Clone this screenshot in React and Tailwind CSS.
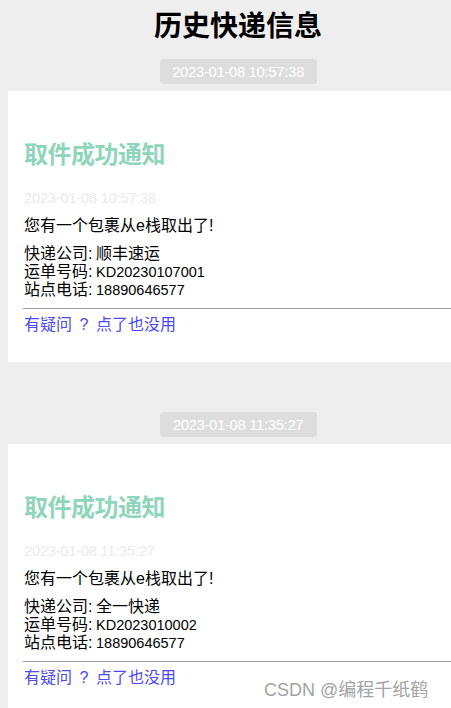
import React from "react";

const records = [
  { time: "2023-01-08 10:57:38", company: "顺丰速运", no: "KD20230107001", phone: "18890646577" },
  { time: "2023-01-08 11:35:27", company: "全一快递", no: "KD2023010002", phone: "18890646577" },
];

function Colon() {
  return <span className="inline-block w-2">:</span>;
}

function Block({ r, first }) {
  return (
    <div className={first ? "mt-[17px]" : "mt-[50px]"}>
      <div className="flex justify-center">
        <div className="h-[25px] w-[157px] rounded-[4px] bg-[#dddddd] text-white text-[15px] leading-[25px] text-center tracking-[-0.4px] font-['Liberation_Sans',sans-serif]">
          {r.time}
        </div>
      </div>
      <div className="mt-[7px] bg-white h-[271px] pt-[46px] px-4">
        <div className="text-[24px] leading-[32px] font-bold text-[#8fd5b9] font-['Noto_Sans_CJK_SC',sans-serif] tracking-[-0.5px]">
          取件成功通知
        </div>
        <div className="mt-[19px] text-[15px] leading-[20px] text-[#ebebeb] tracking-[-0.4px] font-['Liberation_Sans',sans-serif]">
          {r.time}
        </div>
        <div className="mt-[9px] text-[16px] leading-[18px] text-black font-['Liberation_Sans','Noto_Sans_CJK_SC',sans-serif]">
          您有一个包裹从e栈取出了!
        </div>
        <div className="mt-[10px] text-[16px] leading-[18px] text-black font-['Liberation_Sans','Noto_Sans_CJK_SC',sans-serif]">
          <div>快递公司<Colon />{r.company}</div>
          <div>运单号码<Colon /><span className="text-[14.5px]">{r.no}</span></div>
          <div>站点电话<Colon /><span className="text-[14.5px]">{r.phone}</span></div>
        </div>
        <div className="mt-[9px] -ml-px h-px bg-[#a0a0a0]" />
        <div className="mt-[7px] text-[16px] leading-[18px] text-[#4a4af0] font-['Liberation_Sans','Noto_Sans_CJK_SC',sans-serif]">
          有疑问<span className="inline-block w-6 text-center">?</span>点了也没用
        </div>
      </div>
    </div>
  );
}

export default function App() {
  return (
    <div className="relative w-[451px] h-[708px] overflow-hidden bg-[#eeeeee]">
      <div className="w-[476px] px-2 pt-[6px]">
        <div className="text-center text-[28px] leading-[36px] font-bold text-black font-['Noto_Sans_CJK_SC',sans-serif]">
          历史快递信息
        </div>
        {records.map((r, i) => (
          <Block key={i} r={r} first={i === 0} />
        ))}
      </div>
      <div className="absolute left-[264px] top-[678px] text-[18px] leading-[24px] text-[#a3a3a3] font-['Liberation_Sans','Noto_Sans_CJK_SC',sans-serif] [text-shadow:0_0_2px_#ffffff]">
        CSDN @编程千纸鹤
      </div>
    </div>
  );
}
